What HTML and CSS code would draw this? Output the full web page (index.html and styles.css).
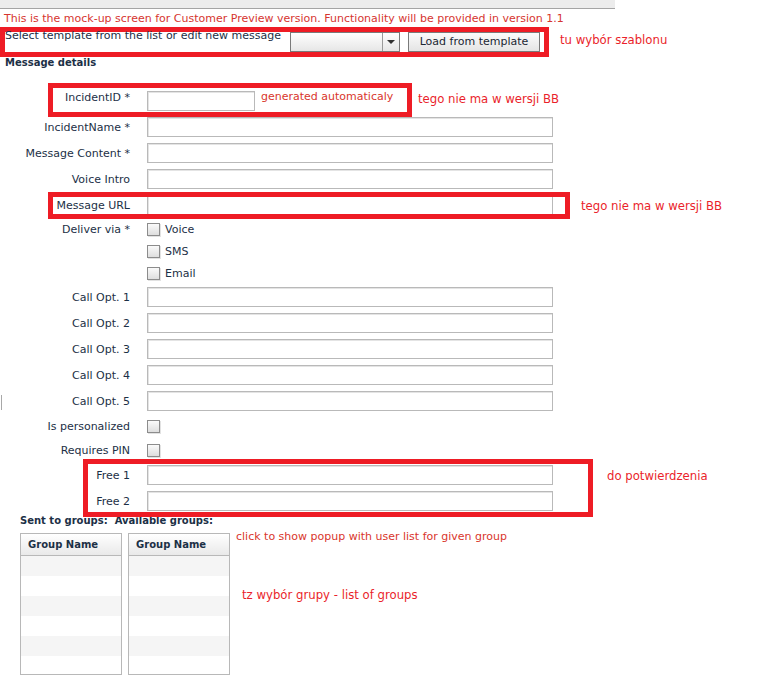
FILE: index.html
```html
<!DOCTYPE html>
<html>
<head>
<meta charset="utf-8">
<title>Message details</title>
<link rel="stylesheet" href="styles.css">
</head>
<body>
<div class="topbar"></div>
<div class="notice">This is the mock-up screen for Customer Preview version. Functionality will be provided in version 1.1</div>

<div class="template-line">
  <div class="template-box">
    <span class="template-label">Select template from the list or edit new message</span>
    <span class="select"><span class="select-value"></span><span class="select-arrow"></span></span>
    <span class="btn">Load from template</span>
  </div>
  <span class="annot annot-template">tu wybór szablonu</span>
</div>

<div class="section-title">Message details</div>

<div class="form">
  <div class="row row-boxed-id">
    <span class="lbl lbl-high">IncidentID *</span>
    <span class="input input-short"></span>
    <span class="hint">generated automaticaly</span>
    <span class="annot annot-high">tego nie ma w wersji BB</span>
  </div>
  <div class="row"><span class="lbl">IncidentName *</span><span class="input"></span></div>
  <div class="row"><span class="lbl">Message Content *</span><span class="input"></span></div>
  <div class="row"><span class="lbl">Voice Intro</span><span class="input"></span></div>
  <div class="row row-boxed-url">
    <span class="lbl">Message URL</span>
    <span class="input"></span>
    <span class="annot annot-url">tego nie ma w wersji BB</span>
  </div>
  <div class="row row-cb"><span class="lbl">Deliver via *</span><span class="cb"></span><span class="cb-text">Voice</span></div>
  <div class="row row-cb"><span class="lbl"></span><span class="cb"></span><span class="cb-text">SMS</span></div>
  <div class="row row-cb"><span class="lbl"></span><span class="cb"></span><span class="cb-text">Email</span></div>
  <div class="row"><span class="lbl">Call Opt. 1</span><span class="input"></span></div>
  <div class="row"><span class="lbl">Call Opt. 2</span><span class="input"></span></div>
  <div class="row"><span class="lbl">Call Opt. 3</span><span class="input"></span></div>
  <div class="row"><span class="lbl">Call Opt. 4</span><span class="input"></span></div>
  <div class="row"><span class="tick"></span><span class="lbl lbl-tick">Call Opt. 5</span><span class="input"></span></div>
  <div class="row row-cb2"><span class="lbl">Is personalized</span><span class="cb"></span></div>
  <div class="row row-cb2"><span class="lbl">Requires PIN</span><span class="cb"></span></div>
  <div class="free-group">
    <div class="row"><span class="lbl">Free 1</span><span class="input"></span><span class="annot annot-free">do potwierdzenia</span></div>
    <div class="row"><span class="lbl">Free 2</span><span class="input"></span></div>
  </div>
</div>

<div class="groups-title">Sent to groups:&nbsp; Available groups:</div>

<div class="groups">
  <div class="grid">
    <div class="grid-head">Group Name</div>
    <div class="grid-row alt"></div>
    <div class="grid-row"></div>
    <div class="grid-row alt"></div>
    <div class="grid-row"></div>
    <div class="grid-row alt"></div>
    <div class="grid-row last"></div>
  </div>
  <div class="grid">
    <div class="grid-head">Group Name</div>
    <div class="grid-row alt"></div>
    <div class="grid-row"></div>
    <div class="grid-row alt"></div>
    <div class="grid-row"></div>
    <div class="grid-row alt"></div>
    <div class="grid-row last"></div>
  </div>
  <div class="groups-notes">
    <div class="hint hint-popup">click to show popup with user list for given group</div>
    <div class="annot annot-groups">tz wybór grupy - list of groups</div>
  </div>
</div>
</body>
</html>
```

FILE: styles.css
```css
*, *::before, *::after { box-sizing: border-box; }

html, body {
  margin: 0;
  padding: 0;
  background: #ffffff;
}

body {
  font-family: "DejaVu Sans", Verdana, sans-serif;
  font-size: 11px;
  color: #1c3046;
  width: 773px;
  height: 676px;
  overflow: hidden;
}

.topbar {
  width: 615px;
  height: 9px;
  background: #ececec;
  border-bottom: 1px solid #a4a4a4;
}

.notice {
  color: #d6352f;
  padding: 2px 0 0 4px;
  line-height: 16px;
  height: 18px;
  white-space: nowrap;
}

.template-line {
  display: flex;
  align-items: center;
}

.template-box {
  display: flex;
  align-items: flex-start;
  width: 549px;
  height: 30px;
  border: 5px solid #ee1c25;
}

.template-label {
  width: 285px;
  line-height: 12px;
  margin-top: -2px;
  white-space: nowrap;
}

.select {
  display: flex;
  width: 110px;
  height: 20px;
  border: 1px solid #7a7a7a;
  background: linear-gradient(#ffffff, #e6e6e6);
  margin-right: 8px;
}

.select-value { flex: 1; }

.select-arrow {
  width: 17px;
  border-left: 1px solid #9a9a9a;
  display: flex;
  align-items: center;
  justify-content: center;
}

.select-arrow::after {
  content: "";
  border-left: 4px solid transparent;
  border-right: 4px solid transparent;
  border-top: 4px solid #333;
}

.btn {
  width: 132px;
  height: 20px;
  border: 1px solid #7a7a7a;
  background: linear-gradient(#fbfbfb, #e4e4e4);
  color: #1b2733;
  text-align: center;
  line-height: 18px;
  white-space: nowrap;
}

.annot {
  font-family: "DejaVu Sans Condensed", "DejaVu Sans", sans-serif;
  font-size: 13px;
  color: #ea1f2b;
  white-space: nowrap;
}

.annot-template { margin-left: 11px; margin-top: -6px; }

.section-title {
  font-weight: bold;
  font-size: 10px;
  padding-left: 5px;
  line-height: 12px;
  height: 12px;
  margin-bottom: 19px;
}

.form { display: flex; flex-direction: column; }

.row {
  display: flex;
  align-items: center;
  height: 26px;
  position: relative;
}

.row-cb { height: 22px; }
.row-cb2 { height: 24px; }

.lbl {
  width: 130px;
  text-align: right;
  margin-right: 17px;
  white-space: nowrap;
  flex-shrink: 0;
}

.lbl-high { align-self: flex-start; padding-top: 3px; }

.tick {
  width: 1px;
  height: 15px;
  margin-left: 1px;
  margin-top: 2px;
  background: #a8a8a8;
  flex-shrink: 0;
}

.lbl-tick { width: 128px; }

.input {
  width: 406px;
  height: 20px;
  border: 1px solid #b9b9b9;
  box-shadow: inset 1px 1px 0 #e4e4e4;
  background: #fff;
  flex-shrink: 0;
}

.input-short { width: 108px; }

.hint {
  color: #d9362c;
  white-space: nowrap;
}

.row-boxed-id .hint {
  width: 157px;
  margin-left: 6px;
  align-self: flex-start;
  padding-top: 2px;
}

.annot-high { align-self: flex-start; padding-top: 3px; }

.row-boxed-id::before {
  content: "";
  position: absolute;
  left: 48px;
  top: -5px;
  width: 364px;
  height: 34px;
  border: 5px solid #ee1c25;
}

.row-boxed-url::before {
  content: "";
  position: absolute;
  left: 48px;
  top: 0;
  width: 522px;
  height: 27px;
  border: 5px solid #ee1c25;
}

.annot-url { margin-left: 28px; }

.cb {
  width: 13px;
  height: 13px;
  border: 1px solid #8c8c8c;
  background: linear-gradient(#fafafa, #dedede);
  box-shadow: 1px 1px 0 #e2e2e2;
  flex-shrink: 0;
}

.cb-text { margin-left: 5px; }

.free-group { position: relative; }

.free-group::before {
  content: "";
  position: absolute;
  left: 83px;
  top: -3px;
  width: 510px;
  height: 58px;
  border: 5px solid #ee1c25;
}

.annot-free { margin-left: 54px; }

.groups-title {
  font-weight: bold;
  font-size: 10px;
  padding-left: 20px;
  line-height: 14px;
  height: 14px;
}

.groups {
  display: flex;
  align-items: flex-start;
  padding-left: 20px;
  margin-top: 5px;
}

.grid {
  width: 102px;
  border: 1px solid #b8b8b8;
  margin-right: 6px;
}

.grid-head {
  height: 22px;
  line-height: 21px;
  padding-left: 7px;
  font-weight: bold;
  font-size: 10px;
  background: linear-gradient(#ffffff, #e9e9e9);
  border-bottom: 1px solid #b8b8b8;
}

.grid-row { height: 20px; background: #fff; }
.grid-row.alt { background: #f5f5f5; }
.grid-row.last { height: 18px; }

.groups-notes { display: flex; flex-direction: column; }

.hint-popup { margin-top: -3px; }

.annot-groups { margin-left: 6px; margin-top: 44px; }
```
